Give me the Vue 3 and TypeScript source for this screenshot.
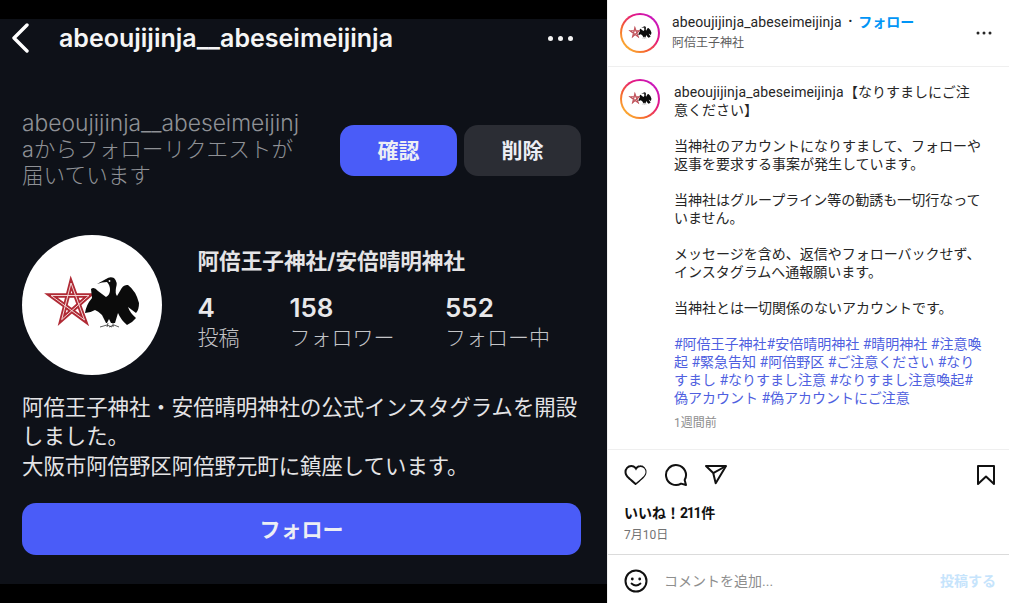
<script setup lang="ts">
const stats = [
  { value: "4", label: "投稿", width: 92 },
  { value: "158", label: "フォロワー", width: 155.5 },
  { value: "552", label: "フォロー中", width: 120 },
];

const paragraphs = [
  ["当神社のアカウントになりすまして、フォローや", "返事を要求する事案が発生しています。"],
  ["当神社はグループライン等の勧誘も一切行なって", "いません。"],
  ["メッセージを含め、返信やフォローバックせず、", "インスタグラムへ通報願います。"],
  ["当神社とは一切関係のないアカウントです。"],
];

const tags = [
  "#阿倍王子神社#安倍晴明神社 #晴明神社 #注意喚",
  "起 #緊急告知 #阿倍野区 #ご注意ください #なり",
  "すまし #なりすまし注意 #なりすまし注意喚起#",
  "偽アカウント #偽アカウントにご注意",
];
</script>

<template>
  <div class="page">
    <svg class="defs" width="0" height="0" aria-hidden="true">
      <symbol id="logo" viewBox="0 0 140 140">
        <polygon points="49,48 62.5,85 29,60.5 67,60.5 39.7,84.6" fill="none" stroke="#b02a35" stroke-width="4.5" />
        <polygon points="49,48 62.5,85 29,60.5 67,60.5 39.7,84.6" fill="none" stroke="#f3d5d5" stroke-width="1" />
        <path
          d="M75 49 L84 44 Q88 41 92 43 Q96 47 94 53 Q93 58 95 61 L98 56 Q101 49 106 50 Q114 56 117 68 Q117 75 114 78 L106 72 Q108 78 114 83 Q110 88 105 90 Q99 85 96 78 L93 88 L89 88 L87 84 L85 88 L84 88 L80 80 Q76 76 73 75 Q68 78 63 78 Q64 70 70 63 L69 54 Q72 51 76 56 L84 62 Q88 60 88 55 Q88 50 85 47 Q80 47 75 49 Z"
          fill="#0b0b0b"
        />
        <circle cx="87.5" cy="46" r="0.9" fill="#fff" />
        <path d="M86 88 L85 92 M91 88 L91 92 M78 92 L85 90 L90 92 M87 92 L92 90 L97 92" fill="none" stroke="#333" stroke-width="0.8" />
      </symbol>
    </svg>

    <section class="phone">
      <div class="phone-inner">
        <header class="nav">
          <svg class="back" width="18" height="30" viewBox="0 0 18 30">
            <path d="M16 2 L3 15 L16 28" fill="none" stroke="#fff" stroke-width="3.4" stroke-linecap="round" stroke-linejoin="round" />
          </svg>
          <h1 class="nav-title">abeoujijinja__abeseimeijinja</h1>
          <div class="nav-dots"><i></i><i></i><i></i></div>
        </header>

        <div class="request">
          <p class="request-text"><span class="request-user">abeoujijinja__abeseimeijinj</span><br />aからフォローリクエストが<br />届いています</p>
          <div class="request-actions">
            <button class="btn primary">確認</button>
            <button class="btn muted">削除</button>
          </div>
        </div>

        <div class="profile">
          <div class="avatar"><svg width="140" height="140"><use href="#logo" /></svg></div>
          <div class="profile-info">
            <div class="profile-name">阿倍王子神社/安倍晴明神社</div>
            <div class="stats">
              <div v-for="s in stats" :key="s.label" class="stat" :style="{ width: s.width + 'px' }">
                <div class="stat-value">{{ s.value }}</div>
                <div class="stat-label">{{ s.label }}</div>
              </div>
            </div>
          </div>
        </div>

        <p class="bio">阿倍王子神社・安倍晴明神社の公式インスタグラムを開設<br />しました。<br />大阪市阿倍野区阿倍野元町に鎮座しています。</p>

        <button class="btn primary follow">フォロー</button>
      </div>
    </section>

    <aside class="post">
      <header class="post-head">
        <div class="ring"><div class="ring-in"><svg width="34" height="34"><use href="#logo" /></svg></div></div>
        <div class="post-head-text">
          <div class="post-user">
            <span class="username">abeoujijinja_abeseimeijinja</span>
            <span class="sep">•</span>
            <span class="post-follow">フォロー</span>
          </div>
          <div class="post-place">阿倍王子神社</div>
        </div>
        <svg class="more" width="24" height="24" viewBox="0 0 24 24">
          <circle cx="12" cy="12" r="1.5" />
          <circle cx="6" cy="12" r="1.5" />
          <circle cx="18" cy="12" r="1.5" />
        </svg>
      </header>

      <div class="caption">
        <div class="ring"><div class="ring-in"><svg width="34" height="34"><use href="#logo" /></svg></div></div>
        <div class="caption-body">
          <p><span class="username caption-user">abeoujijinja_abeseimeijinja</span> 【なりすましにご注<br />意ください】</p>
          <p v-for="(lines, i) in paragraphs" :key="i">
            <template v-for="line in lines" :key="line">{{ line }}<br /></template>
          </p>
          <p class="tags">
            <template v-for="line in tags" :key="line">{{ line }}<br /></template>
          </p>
          <div class="ago">1週間前</div>
        </div>
      </div>

      <div class="actions">
        <svg width="24" height="24" viewBox="0 0 24 24" fill="#111">
          <path d="M16.792 3.904A4.989 4.989 0 0 1 21.5 9.122c0 3.072-2.652 4.959-5.197 7.222-2.512 2.243-3.865 3.469-4.303 3.752-.477-.309-2.143-1.823-4.303-3.752C5.141 14.072 2.5 12.167 2.5 9.122a4.989 4.989 0 0 1 4.708-5.218 4.21 4.21 0 0 1 3.675 1.941c.84 1.175.98 1.763 1.12 1.763s.278-.588 1.11-1.766a4.17 4.17 0 0 1 3.679-1.938m0-2a6.04 6.04 0 0 0-4.797 2.127 6.052 6.052 0 0 0-4.787-2.127A6.985 6.985 0 0 0 .5 9.122c0 3.61 2.55 5.827 5.015 7.97.283.246.569.494.853.747l1.027.918a44.998 44.998 0 0 0 3.518 3.018 1 1 0 0 0 1.174 0 45.263 45.263 0 0 0 3.554-3.049l.995-.887c.285-.254.573-.504.857-.75 2.318-2.011 5.007-4.344 5.007-7.967a6.985 6.985 0 0 0-6.708-7.218Z" />
        </svg>
        <svg width="24" height="24" viewBox="0 0 24 24" fill="none" stroke="#111" stroke-width="2" stroke-linejoin="round">
          <path d="M20.656 17.008a9.993 9.993 0 1 0-3.59 3.615L22 22Z" />
        </svg>
        <svg width="24" height="24" viewBox="0 0 24 24" fill="none" stroke="#111" stroke-width="2" stroke-linejoin="round">
          <line x1="22" y1="3" x2="9.218" y2="10.083" />
          <polygon points="11.698 20.334 22 3.001 2 3.001 9.218 10.084 11.698 20.334" />
        </svg>
        <svg class="save" width="24" height="24" viewBox="0 0 24 24" fill="none" stroke="#111" stroke-width="2" stroke-linecap="round" stroke-linejoin="round">
          <polygon points="20 21 12 13.44 4 21 4 3 20 3 20 21" />
        </svg>
      </div>

      <div class="likes">いいね！<span class="likes-num">211</span>件</div>
      <div class="date">7月10日</div>

      <div class="comment">
        <svg width="24" height="24" viewBox="0 0 24 24" fill="none" stroke="#111">
          <circle cx="12" cy="12" r="10.5" stroke-width="2" />
          <circle cx="8.3" cy="10" r="1.4" fill="#111" stroke="none" />
          <circle cx="15.7" cy="10" r="1.4" fill="#111" stroke="none" />
          <path d="M7.5 14.5 Q12 18.5 16.5 14.5" stroke-width="1.8" stroke-linecap="round" />
        </svg>
        <span class="comment-input">コメントを追加...</span>
        <span class="comment-send">投稿する</span>
      </div>
    </aside>
  </div>
</template>

<style>
html,
body {
  margin: 0;
  background: #fff;
}
</style>

<style scoped>
.page {
  display: flex;
  width: 1009px;
  height: 603px;
  overflow: hidden;
  font-family: Inter, "Noto Sans CJK JP", sans-serif;
}

.defs {
  position: absolute;
}

.phone {
  width: 607px;
  flex: none;
  background: #000;
  padding: 19px 0;
  box-sizing: border-box;
}

.phone-inner {
  height: 565px;
  background: #0e1118;
  padding: 0 26px 0 22px;
  box-sizing: border-box;
  color: #f0f0f2;
}

.nav {
  display: flex;
  align-items: center;
  height: 38px;
}

.back {
  margin-left: -11px;
}

.nav-title {
  margin: 0 0 0 30px;
  font-size: 25px;
  font-weight: 600;
  line-height: 38px;
  color: #f5f5f5;
  flex: 1;
}

.nav-dots {
  display: flex;
  gap: 5px;
  margin-right: 8px;
}

.nav-dots i {
  width: 5px;
  height: 5px;
  border-radius: 50%;
  background: #f2f2f2;
}

.request {
  display: flex;
  align-items: center;
  justify-content: space-between;
  margin-top: 53px;
}

.request-text {
  margin: 0;
  font-size: 21.6px;
  line-height: 26px;
  font-weight: 300;
  color: #8f9196;
  white-space: nowrap;
}

.request-user {
  font-size: 22.8px;
}

.request-actions {
  display: flex;
  gap: 7px;
  margin-top: 2px;
}

.btn {
  border: 0;
  border-radius: 14px;
  width: 117px;
  height: 51px;
  font: inherit;
  font-size: 21px;
  font-weight: 700;
  color: #eceef4;
  padding: 0 0 2px;
}

.primary {
  background: #4a5cf8;
}

.muted {
  background: #2b2d34;
}

.profile {
  display: flex;
  align-items: flex-start;
  margin-top: 47px;
}

.avatar {
  width: 140px;
  height: 140px;
  border-radius: 50%;
  background: #fff;
  flex: none;
}

.avatar svg {
  display: block;
}

.profile-info {
  margin-left: 35.5px;
}

.profile-name {
  margin-top: 10px;
  font-size: 21.6px;
  line-height: 32px;
  font-weight: 700;
  color: #e4e4e6;
}

.stats {
  display: flex;
  margin-top: 16px;
}

.stat {
  white-space: nowrap;
}

.stat-value {
  font-size: 26px;
  line-height: 30px;
  font-weight: 600;
  color: #e8e8ea;
}

.stat-label {
  font-size: 21px;
  line-height: 30px;
  font-weight: 300;
  color: #c4c5c8;
}

.bio {
  margin: 18px 0 0;
  font-size: 21.4px;
  line-height: 29.4px;
  font-weight: 400;
  color: #e4e4e6;
  white-space: nowrap;
}

.follow {
  display: block;
  width: 559px;
  height: 52px;
  margin-top: 22px;
  padding-bottom: 3px;
}

.post {
  flex: 1;
  display: flex;
  flex-direction: column;
  background: #fff;
  border-left: 1px solid #efefef;
  box-sizing: border-box;
  font-family: Roboto, "Noto Sans CJK JP", sans-serif;
  color: #262626;
  font-size: 14px;
  line-height: 18px;
}

.post-head {
  display: flex;
  align-items: center;
  height: 66px;
  flex: none;
  border-bottom: 1px solid #efefef;
  padding: 0 12px;
}

.ring {
  width: 40px;
  height: 40px;
  border-radius: 50%;
  flex: none;
  padding: 2px;
  box-sizing: border-box;
  background: linear-gradient(45deg, #fdc033 8%, #f5652f 35%, #e5197f 62%, #c415c9 90%);
}

.ring-in {
  width: 100%;
  height: 100%;
  border-radius: 50%;
  background: #fff;
  display: flex;
  align-items: center;
  justify-content: center;
}

.ring-in svg {
  display: block;
}

.post-head-text {
  margin-left: 12px;
  flex: 1;
  padding-bottom: 1px;
}

.post-user {
  display: flex;
  align-items: center;
  white-space: nowrap;
}

.username {
  letter-spacing: 0.11px;
}

.caption-user {
  margin-right: -3px;
}

.sep {
  margin: 0 6px 0 7px;
  font-size: 11px;
}

.post-follow {
  color: #0095f6;
  font-weight: 700;
}

.post-place {
  font-size: 12px;
  color: #5c5c5c;
  margin-top: 3px;
}

.more {
  fill: #262626;
  margin-right: 1px;
}

.caption {
  flex: 1;
  display: flex;
  padding: 12px 12px 0;
  border-bottom: 1px solid #efefef;
}

.caption-body {
  margin-left: 14px;
  white-space: nowrap;
  padding-top: 4px;
}

.caption-body p {
  margin: 0 0 18px;
}

.caption-body .tags {
  color: #4f5fe0;
  margin-bottom: 7px;
}

.ago {
  font-size: 12px;
  color: #8e8e8e;
  line-height: 18px;
}

.actions {
  display: flex;
  gap: 16px;
  flex: none;
  padding: 13px 11px 0 16px;
  height: 38px;
}

.save {
  margin-left: auto;
}

.likes {
  padding: 0 16px;
  margin-top: 2px;
  font-weight: 700;
  font-size: 14px;
  line-height: 20px;
  color: #111;
}

.likes-num {
  letter-spacing: -1.3px;
  margin-right: 1px;
}

.date {
  padding: 0 16px;
  margin-top: 3px;
  font-size: 12px;
  color: #737373;
}

.comment {
  display: flex;
  align-items: center;
  height: 49px;
  margin-top: 10px;
  padding: 3px 13px 0 16px;
  border-top: 1px solid #dbdbdb;
  flex: none;
  box-sizing: border-box;
}

.comment-input {
  margin-left: 16px;
  font-size: 14px;
  color: #8e8e8e;
  flex: 1;
}

.comment-send {
  font-size: 14px;
  font-weight: 700;
  color: #c6e4fc;
}
</style>
